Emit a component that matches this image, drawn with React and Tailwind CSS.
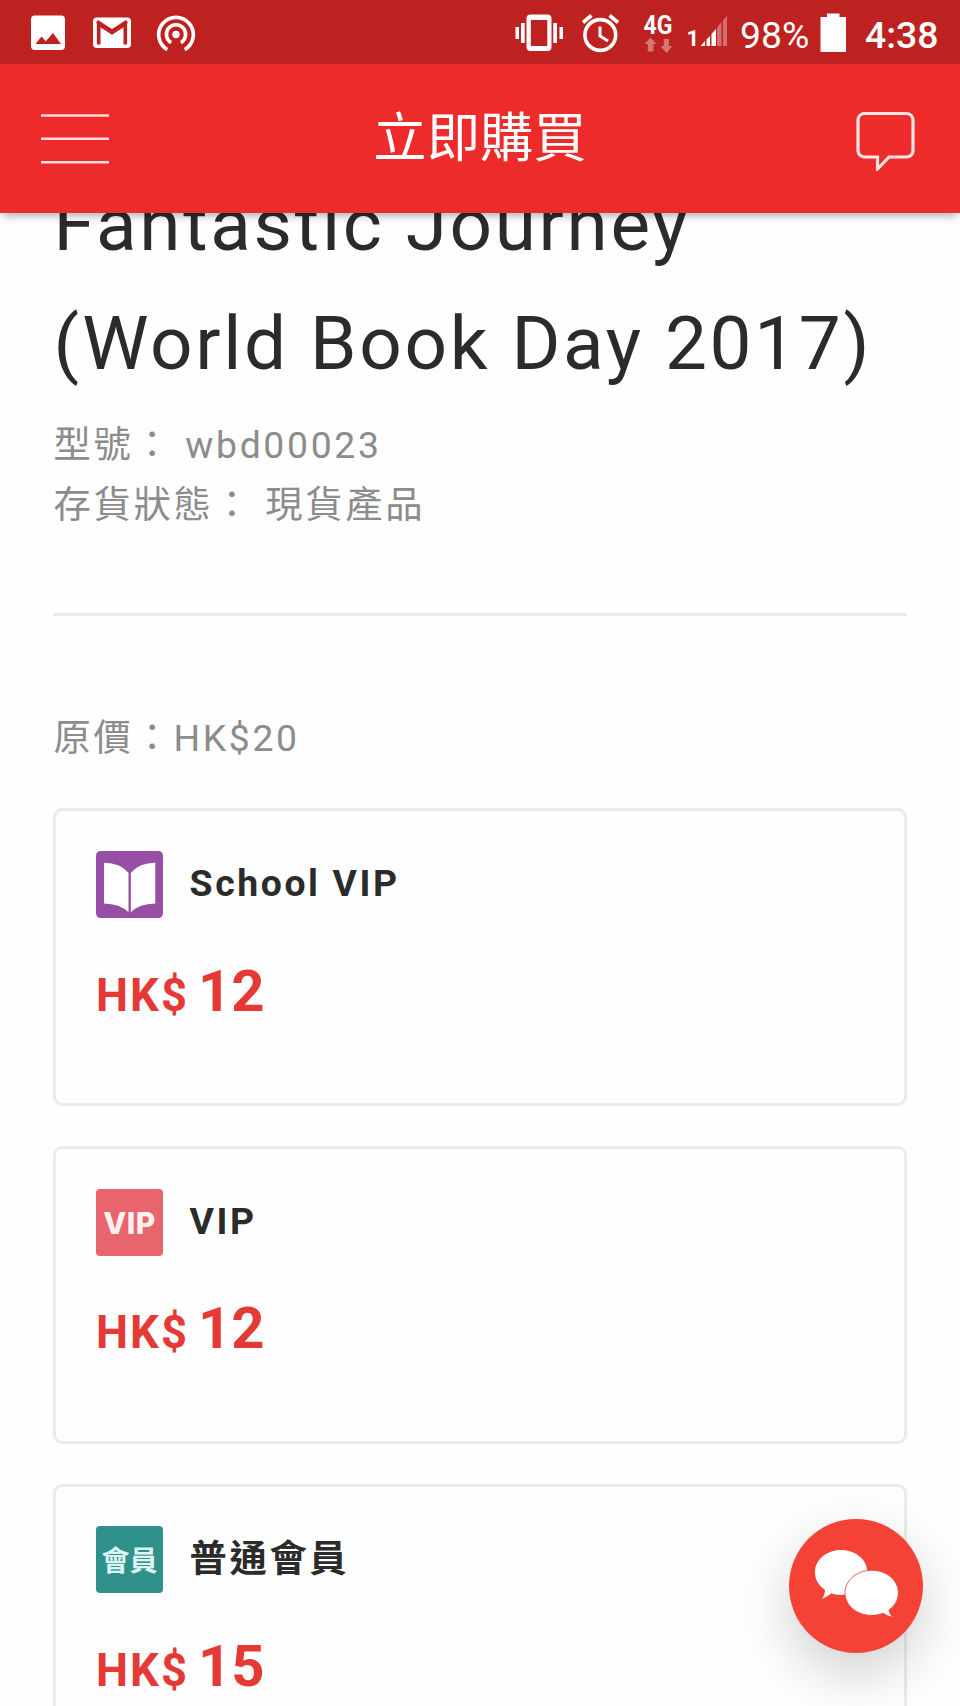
import React from "react";

const FONT = "font-['Roboto','Noto_Sans_CJK_TC',sans-serif]";

function StatusBar() {
  return (
    <div className="flex h-16 shrink-0 items-start bg-[#bd2220] text-white">
      <svg className="mt-[15px] ml-[30px] h-[36px] w-[36px]" viewBox="30 15 36 36" fill="none">
        <rect x="31" y="15.5" width="34" height="34.5" rx="4" fill="#fff" />
        <path d="M35.5 44 L41.5 36.5 L45.8 41.2 L53 33 L61 44 Z" fill="#bd2220" />
      </svg>
      <svg className="mt-[15px] ml-[26px] h-[36px] w-[40px]" viewBox="92 15 40 36" fill="none">
        <rect x="93" y="17.5" width="38" height="30.5" rx="4" fill="#fff" />
        <path d="M98.7 44.5 V24 L112 32.5 L125.300 24 V44.500" stroke="#bd2220" strokeWidth="3.600" />
        <path d="M97 21.500 L112 31.200 L127 21.500" stroke="#bd2220" strokeWidth="3.600" />
      </svg>
      <svg className="mt-[14px] ml-[24px] h-[40px] w-[40px]" viewBox="156 14 40 40" fill="none">
        <circle cx="176" cy="34.500" r="3.700" fill="#fff" />
        <path d="M171.200 42.700 A9.600 9.600 0 1 1 180.800 42.700" stroke="#fff" strokeWidth="3.600" />
        <path d="M167.300 49.600 A17.300 17.300 0 1 1 184.700 49.600" stroke="#fff" strokeWidth="3.600" />
      </svg>

      <svg className="mt-[12px] ml-auto h-[42px] w-[52px]" viewBox="514.500 12 52 42" fill="none">
        <path
          fillRule="evenodd"
          d="M531 14.500 H548 a4 4 0 0 1 4 4 V47 a4 4 0 0 1 -4 4 H531 a4 4 0 0 1 -4 -4 V18.500 a4 4 0 0 1 4 -4 Z M531.300 20 V46 H547.800 V20 Z"
          fill="#fff"
        />
        <path d="M516 27 h3.500 v12 h-3.500 Z M521.500 23 h3.700 v20 h-3.700 Z M553.800 23 h3.700 v20 h-3.700 Z M560 27 h3.500 v12 h-3.500 Z" fill="#fff" />
      </svg>
      <svg className="mt-[12px] ml-[14px] h-[42px] w-[42px]" viewBox="580 12 42 42" fill="none">
        <circle cx="600.300" cy="35" r="15.400" stroke="#fff" strokeWidth="3.600" />
        <path d="M600 26.500 V36 L608 41" stroke="#fff" strokeWidth="3" />
        <path d="M583 22.500 L591.500 15.500 M609.500 15.500 L618 22.500" stroke="#fff" strokeWidth="3.600" />
      </svg>
      <svg className="mt-[12px] ml-[20px] h-[42px] w-[34px]" viewBox="642 12 34 42">
        <text x="643.500" y="33.500" textLength="29" lengthAdjust="spacingAndGlyphs" className="font-['Roboto',sans-serif] text-[25px] font-bold" fill="#fff">4G</text>
        <path d="M650.500 37.500 L656.500 44 H653.500 V51.500 H647.800 V44 H644.500 Z M663.800 39 H669 V46 H672.500 L666.500 53 L660.500 46 H663.800 Z" fill="#fff" fillOpacity=".38" />
      </svg>
      <svg className="mt-[12px] ml-[10px] h-[42px] w-[42px]" viewBox="686 12 42 42">
        <text x="686.500" y="46" className="font-['Roboto',sans-serif] text-[22px] font-bold" fill="#fff">1</text>
        <path d="M700.500 46 L705 41 V46 Z M706.500 39.500 L710 36 V46 H706.500 Z M711.500 34 L716 29 V46 H711.500 Z" fill="#fff" />
        <path d="M717 27.500 L721.500 22 V46 H717 Z M723 20.500 L727 15.500 V46 H723 Z" fill="#fff" fillOpacity=".35" />
      </svg>
      <span className="ml-[12px] mt-[2.500px] w-[70px] text-[37.330px] leading-[64px]">98%</span>
      <svg className="mt-[13px] ml-[10px] h-[40px] w-[26px]" viewBox="820 13 26 40">
        <path d="M827 13.500 H839.500 V17 H846 V52 H820.500 V17 H827 Z" fill="#fff" />
      </svg>
      <span className="ml-[19px] mt-[2.500px] w-[95px] text-[37.330px] leading-[64px] font-medium">4:38</span>
    </div>
  );
}

function Header() {
  return (
    <header className="relative z-10 flex h-[149px] shrink-0 items-center justify-between bg-[#ee2b2b] pl-[41px] pr-[44px] shadow-[0_6px_8px_-3px_rgba(0,0,0,0.3)]">
      <svg className="h-[52px] w-[68px]" viewBox="0 0 68 52" stroke="#ffe0dc" strokeWidth="2.500">
        <path d="M0 2.500 H68 M0 25.700 H68 M0 49.200 H68" />
      </svg>
      <h2 className="-ml-[5px] text-[53.330px] leading-[80px] font-normal text-white">立即購買</h2>
      <svg className="h-[64px] w-[60px]" viewBox="856 106 60 64" fill="none">
        <path
          d="M864.500 112.500 H906.500 a6.500 6.500 0 0 1 6.500 6.500 V149.500 a6.500 6.500 0 0 1 -6.500 6.500 H889 L877.500 168 V156 H864.500 a6.500 6.500 0 0 1 -6.500 -6.500 V119 a6.500 6.500 0 0 1 6.500 -6.500 Z"
          stroke="#ffe5e1"
          strokeWidth="3.200"
        />
      </svg>
    </header>
  );
}

function BookBadge() {
  return (
    <svg className="size-[67px]" viewBox="0 0 200 200">
      <rect width="200" height="200" rx="14" fill="#964fa5" />
      <path d="M24 35 Q72 35 97 65 V183 Q72 158 24 157 Z M177 35 Q129 35 104 65 V183 Q129 158 177 157 Z" fill="#fff" />
    </svg>
  );
}

function Card({ badge, name, price }) {
  return (
    <section className="h-[297.800px] shrink-0 rounded-[9px] border-3 border-[#ebebeb] pt-[39.700px] pl-[39.700px]">
      <div className="flex items-center gap-[26.500px]">
        {badge}
        <span className="-mt-px text-[37.330px] leading-[59.730px] font-bold tracking-[2.600px] text-[#2b2b2b]">{name}</span>
      </div>
      <p className="mt-[32.700px] flex items-baseline font-bold leading-[80px] text-[#e53935]">
        <span className="text-[45.330px] tracking-[2px]">HK$</span>
        <span className="ml-[9px] text-[58px] tracking-[0px]">{price}</span>
      </p>
    </section>
  );
}

export default function App() {
  return (
    <div className={`relative flex h-screen w-full flex-col overflow-hidden bg-[#fefefe] ${FONT}`} lang="zh-Hant">
      <StatusBar />
      <Header />
      <main className="flex min-h-0 flex-1 flex-col overflow-hidden px-[53.400px]">
        <h1 className="-mt-[48.200px] shrink-0 text-[74.670px] leading-[119.470px] tracking-[2.667px] text-[#2b2b2b]">
          Fantastic Journey
          <br />
          (World Book Day 2017)
        </h1>
        <div className="mt-[12.500px] shrink-0 text-[37.330px] leading-[59.730px] tracking-[2.667px] text-[#8c8c8c]">
          <p>型號： wbd00023</p>
          <p>存貨狀態： 現貨產品</p>
        </div>
        <hr className="mt-[77.500px] shrink-0 border-t-3 border-[#ebebeb]" />
        <p className="mt-[92.600px] shrink-0 text-[37.330px] leading-[59.730px] tracking-[2.667px] text-[#8c8c8c]">原價：HK$20</p>
        <div className="mt-[39.600px] flex shrink-0 flex-col gap-[40px]">
          <Card badge={<BookBadge />} name="School VIP" price="12" />
          <Card
            badge={
              <div className="flex size-[67px] items-center justify-center rounded-[4px] bg-[#e8656d] pt-[3px] font-['Inter',sans-serif] text-[30px] tracking-[0.500px] font-extrabold text-[#fff0f0]">
                VIP
              </div>
            }
            name="VIP"
            price="12"
          />
          <Card
            badge={
              <div className="flex size-[67px] items-center justify-center rounded-[4px] bg-[#30918c] pt-[4px] text-[28px] font-bold text-[#dcf5f2]">
                會員
              </div>
            }
            name="普通會員"
            price="15"
          />
        </div>
      </main>
      <button className="absolute right-[37.500px] bottom-[53.300px] z-20 flex size-[133.330px] items-center justify-center rounded-full bg-[#f44336] shadow-[0_21px_54px_rgba(0,0,0,0.18)]">
        <svg className="h-full w-full" viewBox="149 148 400 400">
          <path d="M305 241 C262 241 227 270 227 308 C227 331 239 349 257 361 C257 370 254 378 249 387 C260 383 268 378 275 371 C285 375 295 376 305 376 C350 376 384 346 384 308 C384 270 350 241 305 241 Z" fill="#fff" />
          <path d="M398 302 C441 302 477 331 477 369 C477 391 466 409 449 421 C450 429 454 436 461 443 C449 440 439 437 432 431 C421 435 410 437 398 437 C353 437 317 408 317 369 C317 331 353 302 398 302 Z" fill="#fff" stroke="#e04338" strokeWidth="2.500" />
        </svg>
      </button>
    </div>
  );
}
